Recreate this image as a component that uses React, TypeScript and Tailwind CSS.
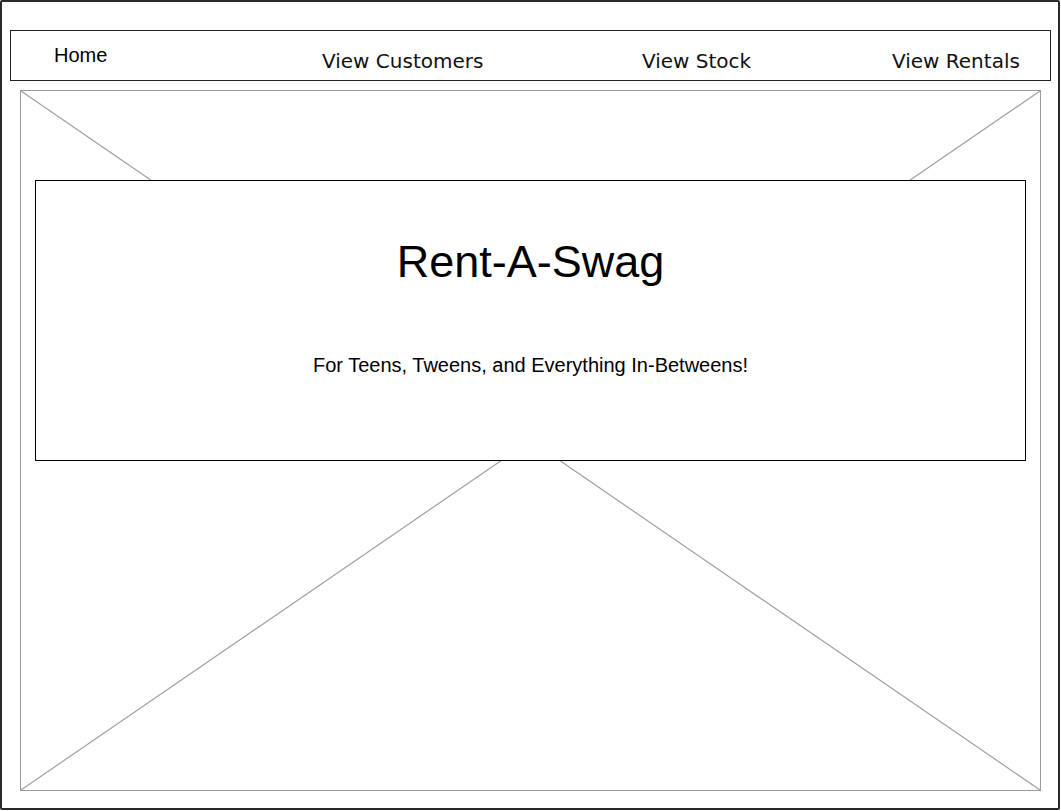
import React from "react";

export default function App() {
  return (
    <div className="w-[1061px] h-[811px] bg-white overflow-hidden">
      <div className="w-[1060px] h-[810px] border-2 border-[#2a2a2a] rounded-[2px] flex flex-col">
        <nav className="ml-[8px] mt-[28px] w-[1041px] h-[51px] border border-[#222] flex items-start shrink-0">
          <div
            className="w-[268px] ml-[43px] mt-[12px] text-[20px] leading-[24px] text-black"
            style={{ fontFamily: '"Liberation Sans", Arial, sans-serif' }}
          >
            Home
          </div>
          {["View Customers", "View Stock", "View Rentals"].map((t, i) => (
            <div
              key={t}
              className={
                "mt-[18px] text-[20px] leading-[24px] text-[#111] whitespace-nowrap " +
                (i === 0 ? "w-[320px]" : i === 1 ? "w-[250px]" : "")
              }
              style={{ fontFamily: '"DejaVu Sans", Verdana, sans-serif' }}
            >
              {t}
            </div>
          ))}
        </nav>
        <div className="relative ml-[18px] mt-[9px] w-[1021px] h-[701px] border border-[#9a9a9a]">
          <svg className="absolute inset-0" width="1019" height="699" viewBox="0 0 1019 699">
            <line x1="0" y1="0" x2="1019" y2="699" stroke="#a0a0a0" strokeWidth="1.2" />
            <line x1="1019" y1="0" x2="0" y2="699" stroke="#a0a0a0" strokeWidth="1.2" />
          </svg>
          <div
            className="relative ml-[14px] mt-[89px] w-[991px] h-[281px] border border-black bg-white flex flex-col items-center"
            style={{ fontFamily: '"Liberation Sans", Arial, sans-serif' }}
          >
            <div className="mt-[58px] text-[45px] leading-[45px] text-black">Rent-A-Swag</div>
            <div className="mt-[69px] text-[20px] leading-[24px] text-black">
              For Teens, Tweens, and Everything In-Betweens!
            </div>
          </div>
        </div>
      </div>
    </div>
  );
}
